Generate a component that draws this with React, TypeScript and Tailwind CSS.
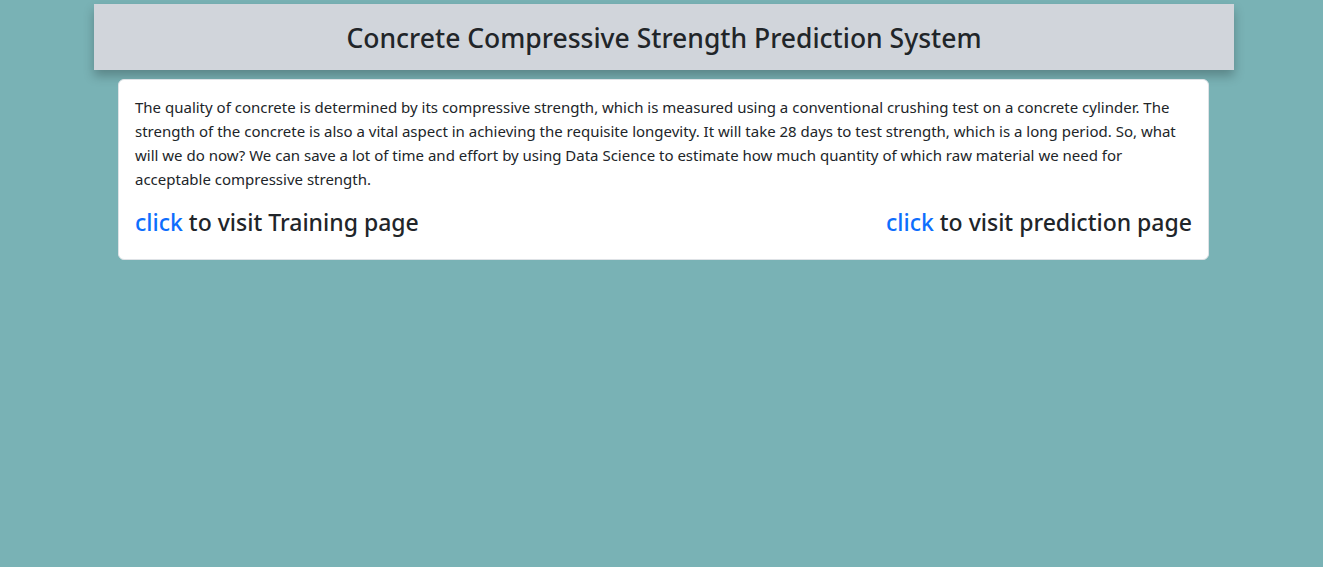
export default function App() {
  return (
    <div className="min-h-[567px] bg-[#79b2b5] text-[#212529] font-['Noto_Sans',_'Open_Sans',_sans-serif]">
      <div className="ml-[94px] w-[1140px] pt-1">
        <header className="h-[66px] bg-[#d1d5db] shadow-[0_6px_10px_rgba(0,0,0,0.25)] flex items-center justify-center">
          <h1 className="text-[26.5px] font-medium leading-none mt-[2px]">
            Concrete Compressive Strength Prediction System
          </h1>
        </header>

        <div className="ml-6 w-[1091px] mt-[9px] bg-white border border-[#dee2e6] rounded-md px-4 pt-[15px] pb-[19px]">
          <p className="text-[15px] leading-6 mb-[13px]">
            The quality of concrete is determined by its compressive strength, which is measured using a conventional crushing test on a concrete cylinder. The strength of the concrete is also a vital aspect in achieving the requisite longevity. It will take 28 days to test strength, which is a long period. So, what will we do now? We can save a lot of time and effort by using Data Science to estimate how much quantity of which raw material we need for acceptable compressive strength.
          </p>
          <div className="flex justify-between text-[23px] font-medium leading-[36px]">
            <h4>
              <a href="#" className="text-[#0d6efd]">click</a> to visit Training page
            </h4>
            <h4>
              <a href="#" className="text-[#0d6efd]">click</a> to visit prediction page
            </h4>
          </div>
        </div>
      </div>
    </div>
  )
}
